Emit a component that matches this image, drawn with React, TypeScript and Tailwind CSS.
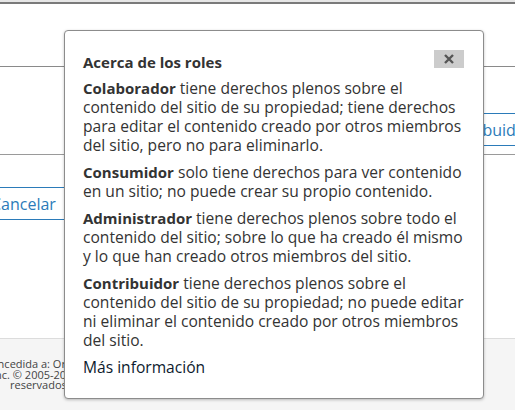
import React from "react";

export default function App() {
  return (
    <div className="relative w-[515px] h-[410px] overflow-hidden bg-white font-['Open_Sans',sans-serif] text-[#333]">
      <div className="flex flex-col h-full">
        <div className="h-[2px] bg-[#e6e6e6]" />
        <div className="h-[2px] bg-[#7a7a7a]" />
        <div className="h-[63px] border-b border-[#8a8a8a]" />
        <div className="flex justify-end pt-[46px]">
          <button className="h-[33px] mr-[-30px] px-3 border border-[#2b7bb9] rounded-[3px] text-[16px] text-[#2b7bb9] bg-white whitespace-nowrap">
            Contribuidor
          </button>
        </div>
        <div className="h-[9px] border-b border-[#9a9a9a]" />
        <div className="flex pt-[32px]">
          <button className="h-[33px] ml-[-21px] px-[11px] border border-[#2b7bb9] rounded-[3px] text-[16px] text-[#2b7bb9] bg-white whitespace-nowrap">
            Cancelar
          </button>
        </div>
        <div className="mt-auto h-[72px] border-t border-[#dcdcdc] bg-[#f5f5f5] pt-[20px] text-[11px] leading-[10.5px] text-[#444] whitespace-nowrap">
          <div className="ml-[-58px]">Licencia concedida a: Oracle America</div>
          <div className="ml-[-8px]">Inc. © 2005-2020 Todos los derechos</div>
          <div className="ml-[10px]">reservados.</div>
        </div>
      </div>

      <div className="absolute left-[64px] top-[30px] w-[420px] h-[369px] bg-white border border-[#8c8c8c] rounded-[4px] shadow-[0_1px_3px_rgba(0,0,0,0.25)] pl-[18px] pr-[16px] pt-[22px] text-[15.6px] leading-[19px]">
        <div className="flex items-start justify-between">
          <div className="font-bold text-[15px] text-[#333]">Acerca de los roles</div>
          <button className="mt-[-3px] mr-[3px] w-[30px] h-[18px] bg-[#cccccc] flex items-center justify-center">
            <svg width="12" height="12" viewBox="0 0 12 12">
              <path d="M2 2 L10 10 M10 2 L2 10" stroke="#555" strokeWidth="2.4" strokeLinecap="butt" />
            </svg>
          </button>
        </div>
        <p className="mt-[7px]">
          <b className="text-[15px]">Colaborador</b> tiene derechos plenos sobre el contenido del sitio de su propiedad; tiene derechos para editar el contenido creado por otros miembros del sitio, pero no para eliminarlo.
        </p>
        <p className="mt-[8px]">
          <b className="text-[15px]">Consumidor</b> solo tiene derechos para ver contenido en un sitio; no puede crear su propio contenido.
        </p>
        <p className="mt-[8px]">
          <b className="text-[15px]">Administrador</b> tiene derechos plenos sobre todo el contenido del sitio; sobre lo que ha creado él mismo y lo que han creado otros miembros del sitio.
        </p>
        <p className="mt-[8px]">
          <b className="text-[15px]">Contribuidor</b> tiene derechos plenos sobre el contenido del sitio de su propiedad; no puede editar ni eliminar el contenido creado por otros miembros del sitio.
        </p>
        <p className="mt-[8px] text-[#0d1b2e]">Más información</p>
      </div>
    </div>
  );
}
